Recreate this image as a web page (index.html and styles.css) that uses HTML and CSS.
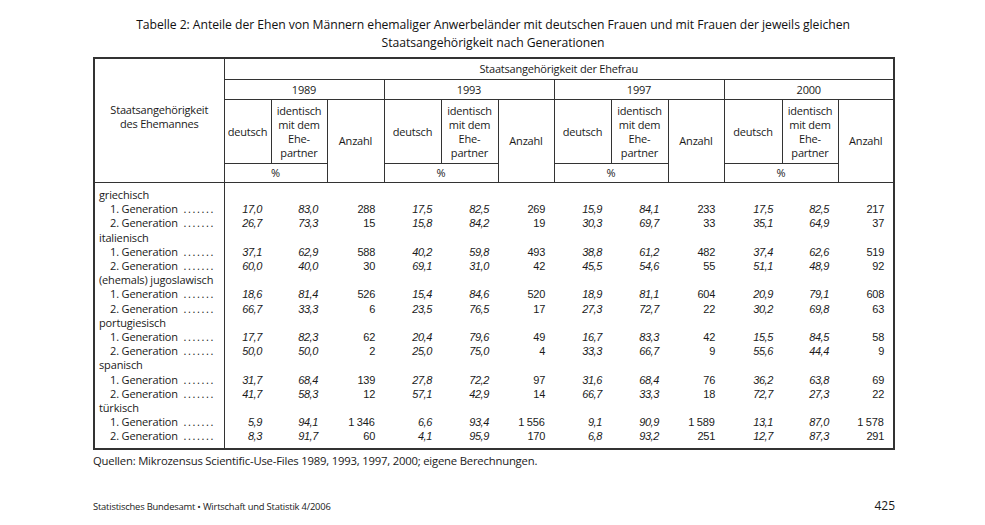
FILE: index.html
```html
<!DOCTYPE html>
<html lang="de">
<head>
<meta charset="utf-8">
<title>Tabelle 2</title>
<link rel="stylesheet" href="styles.css">
</head>
<body>
<div class="page">
  <h1 class="title">Tabelle 2: Anteile der Ehen von Männern ehemaliger Anwerbeländer mit deutschen Frauen und mit Frauen der jeweils gleichen<br>Staatsangehörigkeit nach Generationen</h1>
  <table class="tab">
    <colgroup>
      <col class="c-stub">
      <col class="c47"><col class="c56"><col class="c57">
      <col class="c57"><col class="c57"><col class="c56">
      <col class="c57"><col class="c57"><col class="c56">
      <col class="c58"><col class="c56"><col class="c56">
    </colgroup>
    <thead>
      <tr class="h1">
        <th rowspan="4" class="stubhead">Staatsangehörigkeit<br>des Ehemannes</th>
        <th colspan="12">Staatsangehörigkeit der Ehefrau</th>
      </tr>
      <tr class="h2">
        <th colspan="3">1989</th>
        <th colspan="3">1993</th>
        <th colspan="3">1997</th>
        <th colspan="3">2000</th>
      </tr>
      <tr class="h3">
        <th>deutsch</th><th>identisch<br>mit dem<br>Ehe-<br>partner</th><th rowspan="2">Anzahl</th>
        <th>deutsch</th><th>identisch<br>mit dem<br>Ehe-<br>partner</th><th rowspan="2">Anzahl</th>
        <th>deutsch</th><th>identisch<br>mit dem<br>Ehe-<br>partner</th><th rowspan="2">Anzahl</th>
        <th>deutsch</th><th>identisch<br>mit dem<br>Ehe-<br>partner</th><th rowspan="2">Anzahl</th>
      </tr>
      <tr class="h4">
        <th colspan="2">%</th>
        <th colspan="2">%</th>
        <th colspan="2">%</th>
        <th colspan="2">%</th>
      </tr>
    </thead>
    <tbody>
      <tr class="first"><td class="stub">griechisch</td><td></td><td></td><td></td><td></td><td></td><td></td><td></td><td></td><td></td><td></td><td></td><td></td></tr>
      <tr><td class="stub gen">1. Generation <span class="dots">.......</span></td><td class="p">17,0</td><td class="p">83,0</td><td class="n">288</td><td class="p">17,5</td><td class="p">82,5</td><td class="n">269</td><td class="p">15,9</td><td class="p">84,1</td><td class="n">233</td><td class="p">17,5</td><td class="p">82,5</td><td class="n">217</td></tr>
      <tr><td class="stub gen">2. Generation <span class="dots">.......</span></td><td class="p">26,7</td><td class="p">73,3</td><td class="n">15</td><td class="p">15,8</td><td class="p">84,2</td><td class="n">19</td><td class="p">30,3</td><td class="p">69,7</td><td class="n">33</td><td class="p">35,1</td><td class="p">64,9</td><td class="n">37</td></tr>
      <tr><td class="stub">italienisch</td><td></td><td></td><td></td><td></td><td></td><td></td><td></td><td></td><td></td><td></td><td></td><td></td></tr>
      <tr><td class="stub gen">1. Generation <span class="dots">.......</span></td><td class="p">37,1</td><td class="p">62,9</td><td class="n">588</td><td class="p">40,2</td><td class="p">59,8</td><td class="n">493</td><td class="p">38,8</td><td class="p">61,2</td><td class="n">482</td><td class="p">37,4</td><td class="p">62,6</td><td class="n">519</td></tr>
      <tr><td class="stub gen">2. Generation <span class="dots">.......</span></td><td class="p">60,0</td><td class="p">40,0</td><td class="n">30</td><td class="p">69,1</td><td class="p">31,0</td><td class="n">42</td><td class="p">45,5</td><td class="p">54,6</td><td class="n">55</td><td class="p">51,1</td><td class="p">48,9</td><td class="n">92</td></tr>
      <tr><td class="stub">(ehemals) jugoslawisch</td><td></td><td></td><td></td><td></td><td></td><td></td><td></td><td></td><td></td><td></td><td></td><td></td></tr>
      <tr><td class="stub gen">1. Generation <span class="dots">.......</span></td><td class="p">18,6</td><td class="p">81,4</td><td class="n">526</td><td class="p">15,4</td><td class="p">84,6</td><td class="n">520</td><td class="p">18,9</td><td class="p">81,1</td><td class="n">604</td><td class="p">20,9</td><td class="p">79,1</td><td class="n">608</td></tr>
      <tr><td class="stub gen">2. Generation <span class="dots">.......</span></td><td class="p">66,7</td><td class="p">33,3</td><td class="n">6</td><td class="p">23,5</td><td class="p">76,5</td><td class="n">17</td><td class="p">27,3</td><td class="p">72,7</td><td class="n">22</td><td class="p">30,2</td><td class="p">69,8</td><td class="n">63</td></tr>
      <tr><td class="stub">portugiesisch</td><td></td><td></td><td></td><td></td><td></td><td></td><td></td><td></td><td></td><td></td><td></td><td></td></tr>
      <tr><td class="stub gen">1. Generation <span class="dots">.......</span></td><td class="p">17,7</td><td class="p">82,3</td><td class="n">62</td><td class="p">20,4</td><td class="p">79,6</td><td class="n">49</td><td class="p">16,7</td><td class="p">83,3</td><td class="n">42</td><td class="p">15,5</td><td class="p">84,5</td><td class="n">58</td></tr>
      <tr><td class="stub gen">2. Generation <span class="dots">.......</span></td><td class="p">50,0</td><td class="p">50,0</td><td class="n">2</td><td class="p">25,0</td><td class="p">75,0</td><td class="n">4</td><td class="p">33,3</td><td class="p">66,7</td><td class="n">9</td><td class="p">55,6</td><td class="p">44,4</td><td class="n">9</td></tr>
      <tr><td class="stub">spanisch</td><td></td><td></td><td></td><td></td><td></td><td></td><td></td><td></td><td></td><td></td><td></td><td></td></tr>
      <tr><td class="stub gen">1. Generation <span class="dots">.......</span></td><td class="p">31,7</td><td class="p">68,4</td><td class="n">139</td><td class="p">27,8</td><td class="p">72,2</td><td class="n">97</td><td class="p">31,6</td><td class="p">68,4</td><td class="n">76</td><td class="p">36,2</td><td class="p">63,8</td><td class="n">69</td></tr>
      <tr><td class="stub gen">2. Generation <span class="dots">.......</span></td><td class="p">41,7</td><td class="p">58,3</td><td class="n">12</td><td class="p">57,1</td><td class="p">42,9</td><td class="n">14</td><td class="p">66,7</td><td class="p">33,3</td><td class="n">18</td><td class="p">72,7</td><td class="p">27,3</td><td class="n">22</td></tr>
      <tr><td class="stub">türkisch</td><td></td><td></td><td></td><td></td><td></td><td></td><td></td><td></td><td></td><td></td><td></td><td></td></tr>
      <tr><td class="stub gen">1. Generation <span class="dots">.......</span></td><td class="p">5,9</td><td class="p">94,1</td><td class="n">1&#8239;346</td><td class="p">6,6</td><td class="p">93,4</td><td class="n">1&#8239;556</td><td class="p">9,1</td><td class="p">90,9</td><td class="n">1&#8239;589</td><td class="p">13,1</td><td class="p">87,0</td><td class="n">1&#8239;578</td></tr>
      <tr class="last"><td class="stub gen">2. Generation <span class="dots">.......</span></td><td class="p">8,3</td><td class="p">91,7</td><td class="n">60</td><td class="p">4,1</td><td class="p">95,9</td><td class="n">170</td><td class="p">6,8</td><td class="p">93,2</td><td class="n">251</td><td class="p">12,7</td><td class="p">87,3</td><td class="n">291</td></tr>
    </tbody>
  </table>
  <p class="source">Quellen: Mikrozensus Scientific-Use-Files 1989, 1993, 1997, 2000; eigene Berechnungen.</p>
  <div class="footer">
    <span class="imprint">Statistisches Bundesamt • Wirtschaft und Statistik 4/2006</span>
    <span class="pageno">425</span>
  </div>
</div>
</body>
</html>
```

FILE: styles.css
```css
html, body {
  margin: 0;
  padding: 0;
  background: #ffffff;
}

body {
  font-family: "Open Sans", "Noto Sans", sans-serif;
  color: #1a1a1a;
}

.page {
  width: 800px;
  padding: 16px 0 0 93px;
}

.title {
  margin: 0 0 5px 0;
  font-size: 12.2px;
  line-height: 18px;
  font-weight: normal;
  text-align: center;
  letter-spacing: -0.05px;
  color: #111;
}

.tab {
  width: 800px;
  table-layout: fixed;
  border-collapse: collapse;
  border: 2px solid #333;
  font-size: 11px;
}

.c-stub { width: 130px; }
.c47 { width: 47px; }
.c56 { width: 56px; }
.c57 { width: 57px; }
.c58 { width: 58px; }

.tab th {
  font-weight: normal;
  border: 1px solid #333;
  padding: 0;
  text-align: center;
  vertical-align: middle;
  line-height: 14px;
  letter-spacing: -0.2px;
}

.tab .stubhead {
  line-height: 14px;
  padding-bottom: 8px;
  border-right: 1.5px solid #333;
}

.h1 th { height: 20px; }
.h2 th { height: 19px; }
.h3 th { height: 63px; }
.h4 th { height: 18px; }

.tab thead tr:last-child th,
.tab .h3 th[rowspan] {
  border-bottom: 1.5px solid #333;
}

.tab td {
  padding: 0;
  height: 14.2px;
  line-height: 14px;
  white-space: nowrap;
}

.tab td.stub {
  padding-left: 4px;
  border-right: 1.5px solid #333;
  letter-spacing: -0.15px;
}

.tab td.gen {
  padding-left: 15px;
}

.dots {
  letter-spacing: 1.6px;
  margin-left: 3px;
}

.tab td.p {
  font-family: "Liberation Sans", Arial, sans-serif;
  font-style: italic;
  text-align: right;
  padding-right: 9px;
  letter-spacing: -0.4px;
}

.tab td.n {
  font-family: "Liberation Sans", Arial, sans-serif;
  text-align: right;
  padding-right: 9px;
  letter-spacing: -0.3px;
}

.tab tr.first td {
  padding-top: 5px;
}

.tab tr.last td {
  padding-bottom: 5px;
}

.source {
  margin: 4px 0 0 0;
  font-size: 11.3px;
  line-height: 14px;
  letter-spacing: -0.2px;
}

.footer {
  display: flex;
  justify-content: space-between;
  align-items: baseline;
  margin-top: 29px;
}

.imprint {
  font-size: 9.4px;
  letter-spacing: -0.2px;
}

.pageno {
  font-size: 12px;
  margin-right: -2px;
}
```
